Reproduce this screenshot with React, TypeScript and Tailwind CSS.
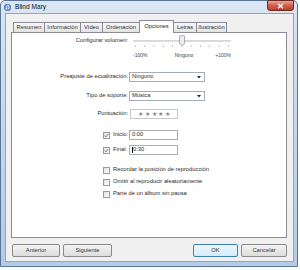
import React from "react";

const font = { fontFamily: '"Liberation Sans", Arial, sans-serif' };

function Check({ checked }: { checked?: boolean }) {
  return (
    <div className="w-[7px] h-[7px] border border-[#9a9b9c] bg-gradient-to-br from-[#e0e0e0] to-[#ffffff] flex items-center justify-center shrink-0">
      {checked && (
        <svg width="5" height="5" viewBox="0 0 5 5">
          <path d="M0.7 2.6 L1.9 3.9 L4.3 0.9" fill="none" stroke="#4b6287" strokeWidth="0.8" />
        </svg>
      )}
    </div>
  );
}

function Select({ value }: { value: string }) {
  return (
    <div className="w-[76px] h-[10px] border border-[#a5acb5] bg-white flex items-center justify-between pl-[2px] pr-[3px]">
      <span className="leading-none">{value}</span>
      <svg width="4" height="3" viewBox="0 0 4 3">
        <path d="M0 0 H4 L2 2.5 Z" fill="#222" />
      </svg>
    </div>
  );
}

function Tab({ label, w, selected }: { label: string; w: number; selected?: boolean }) {
  if (selected) {
    return (
      <div
        className="relative z-10 h-[13px] -mb-px -ml-px bg-white border border-b-0 border-[#898c95] flex items-center justify-center leading-none text-[#222]"
        style={{ width: w }}
      >
        {label}
      </div>
    );
  }
  return (
    <div
      className="h-[10px] -ml-px bg-gradient-to-b from-[#f7f7f7] to-[#e3e3e3] border border-b-0 border-[#898c95] flex items-center justify-center leading-none text-[#333]"
      style={{ width: w }}
    >
      {label}
    </div>
  );
}

function Btn({ label, w, def }: { label: string; w: number; def?: boolean }) {
  return (
    <div
      className={`h-[13px] rounded-[2px] border ${def ? "border-[#3c7fb1] from-[#eaf6fd] to-[#d5ebf8]" : "border-[#8a8a8a] from-[#f3f3f3] to-[#dddddd]"} bg-gradient-to-b flex items-center justify-center leading-none text-[#333]`}
      style={{ width: w }}
    >
      {label}
    </div>
  );
}

export default function App() {
  const ticks = Array.from({ length: 11 }, (_, i) => 2 + i * 9.3);
  return (
    <div className="w-[300px] h-[270px] bg-white overflow-hidden text-[5.8px] text-[#2a2a2a]" style={font}>
      <div className="relative w-[298px] h-[267px] rounded-t-[5px] border border-[#5b7699] bg-gradient-to-b from-[#dae6f3] via-[#c3d6ec] to-[#b3cbe7] flex flex-col">
        {/* title bar */}
        <div className="h-[12px] flex items-center pl-[3px] gap-[4px] shrink-0">
          <svg width="7" height="7" viewBox="0 0 7 7">
            <circle cx="3.5" cy="3.5" r="3.3" fill="#5a8fd0" stroke="#2c5a98" strokeWidth="0.5" />
            <path d="M2.6 5 V2 L4.8 1.5 V4.4" fill="none" stroke="#fff" strokeWidth="0.7" />
            <circle cx="2.2" cy="5" r="0.7" fill="#fff" />
            <circle cx="4.4" cy="4.5" r="0.7" fill="#fff" />
          </svg>
          <span className="text-[6.6px] leading-none text-[#111]">Blind Mary</span>
        </div>
        <div className="absolute top-[-1px] right-[3px] w-[27px] h-[11px] rounded-b-[3px] border border-[#6b2a24] bg-gradient-to-b from-[#e9a497] via-[#d25d4c] to-[#c13d2c] flex items-center justify-center">
          <svg width="7" height="6" viewBox="0 0 7 6">
            <path d="M1 0.8 L6 5.2 M6 0.8 L1 5.2" stroke="#fff" strokeWidth="1.4" />
          </svg>
        </div>

        {/* body */}
        <div className="flex-1 ml-[4px] mr-[3px] mb-[4px] border border-[#8ea6c5] bg-[#f0f0f0] flex flex-col">
          {/* tabs */}
          <div className="flex items-end pt-[5px] pl-[8px] h-[18px] shrink-0">
            <Tab label="Resumen" w={32} />
            <Tab label="Información" w={37} />
            <Tab label="Vídeo" w={23} />
            <Tab label="Ordenación" w={38} />
            <Tab label="Opciones" w={35} selected />
            <Tab label="Letras" w={24} />
            <Tab label="Ilustración" w={31} />
          </div>
          {/* panel */}
          <div className="ml-[5px] w-[276px] h-[206px] border border-[#898c95] bg-white flex flex-col shrink-0">
            {/* volume */}
            <div className="flex items-center h-[12px] mt-[2px]">
              <div className="w-[116px] text-right leading-none">Configurar volumen:</div>
              <div className="ml-[5px]">
                <svg width="98" height="12" viewBox="0 0 98 12">
                  <rect x="0" y="5.5" width="98" height="1.2" fill="#b0b0b0" />
                  <rect x="0" y="6.5" width="98" height="0.6" fill="#f4f4f4" />
                  {ticks.map((x, i) => (
                    <rect key={i} x={x} y="10.5" width="0.8" height="1.2" fill="#8c8c8c" />
                  ))}
                  <path d="M46.5 1.2 Q46.5 0.6 47.2 0.6 H51 Q51.6 0.6 51.6 1.2 V8.5 L49.05 10.6 L46.5 8.5 Z" fill="#eeeeee" stroke="#7a7a7a" strokeWidth="0.6" />
                </svg>
              </div>
            </div>
            <div className="flex h-[8px] mt-[4px]">
              <div className="w-[121px]" />
              <div className="w-[98px] grid grid-cols-3 items-center leading-none text-[5px] text-[#444]">
                <span className="text-left">-100%</span>
                <span className="text-center pl-[4px]">Ninguno</span>
                <span className="text-right">+100%</span>
              </div>
            </div>
            {/* preajuste */}
            <div className="flex items-center h-[10px] mt-[13px]">
              <div className="w-[116px] text-right leading-none">Preajuste de ecualización:</div>
              <div className="ml-[1px]">
                <Select value="Ninguno" />
              </div>
            </div>
            <div className="flex items-center h-[10px] mt-[9px]">
              <div className="w-[116px] text-right leading-none">Tipo de soporte:</div>
              <div className="ml-[1px]">
                <Select value="Música" />
              </div>
            </div>
            <div className="flex items-center h-[10px] mt-[8px]">
              <div className="w-[116px] text-right leading-none">Puntuación:</div>
              <div className="ml-[2px] w-[48px] h-[10px] border border-[#c5c9ce] bg-white flex items-center justify-center gap-[1.6px] text-[6px] leading-none text-[#8a8a8a]">
                <span>★</span><span>★</span><span>★</span><span>★</span><span>★</span>
              </div>
            </div>
            {/* inicio */}
            <div className="flex items-center h-[10px] mt-[11px]">
              <div className="w-[117px] pl-[91px] flex items-center gap-[3px]">
                <Check checked />
                <span className="leading-none">Inicio:</span>
              </div>
              <div className="w-[49px] h-[10px] border border-[#abadb3] bg-white flex items-center pl-[2px] leading-none">0:00</div>
            </div>
            <div className="flex items-center h-[10px] mt-[5px]">
              <div className="w-[117px] pl-[91px] flex items-center gap-[3px]">
                <Check checked />
                <span className="leading-none">Final:</span>
              </div>
              <div className="w-[49px] h-[10px] border border-[#abadb3] bg-white flex items-center pl-[2px] leading-none">
                <span className="border-l border-[#111]">0:30</span>
              </div>
            </div>
            {/* options */}
            <div className="flex items-center h-[8px] mt-[11px] pl-[91px] gap-[3px]">
              <Check />
              <span className="leading-none">Recordar la posición de reproducción</span>
            </div>
            <div className="flex items-center h-[8px] mt-[4px] pl-[91px] gap-[3px]">
              <Check />
              <span className="leading-none">Omitir al reproducir aleatoriamente</span>
            </div>
            <div className="flex items-center h-[8px] mt-[4px] pl-[91px] gap-[3px]">
              <Check />
              <span className="leading-none">Parte de un álbum sin pausa</span>
            </div>
          </div>
          {/* buttons */}
          <div className="flex items-center mt-[6px] px-[6px]">
            <Btn label="Anterior" w={48} />
            <div className="w-[3px]" />
            <Btn label="Siguiente" w={49} />
            <div className="flex-1" />
            <Btn label="OK" w={45} def />
            <div className="w-[3px]" />
            <Btn label="Cancelar" w={46} />
          </div>
        </div>
      </div>
    </div>
  );
}
